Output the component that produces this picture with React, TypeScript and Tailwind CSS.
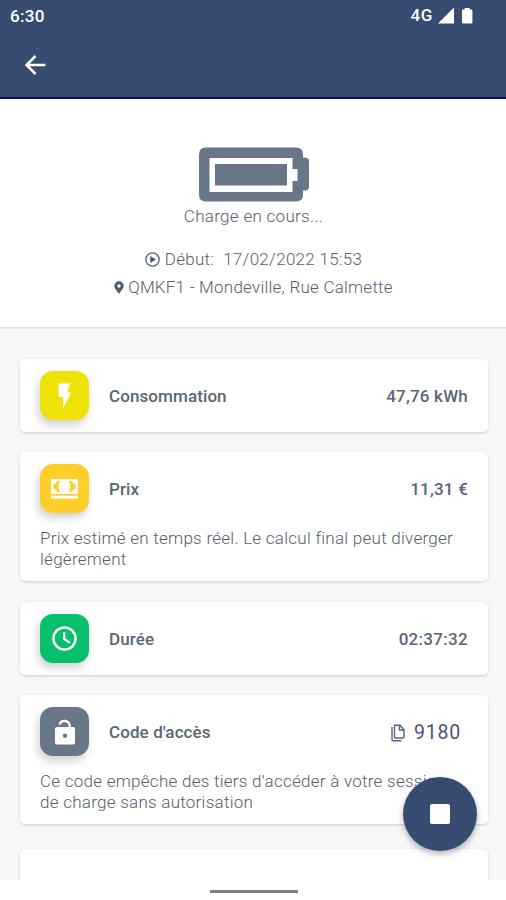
import type { ReactNode } from "react";

function StatusBar() {
  return (
    <div className="flex h-8 items-center justify-between pl-[10px] pr-[32px] text-white">
      <span className="pt-px text-[17px] font-medium tracking-[0.3px]">6:30</span>
      <div className="flex items-center">
        <span className="mr-[5px] text-[17px] font-medium tracking-[0.6px]">4G</span>
        <svg width="36" height="18" viewBox="0 0 36 18" fill="currentColor">
          <path d="M0 16.500 16 0.500V16.500Z" />
          <path d="M24 3.500q0-1 1-1h1.700V1h5v1.500h1.700q1 0 1 1v12q0 1-1 1h-8.400q-1 0-1-1Z" />
        </svg>
      </div>
    </div>
  );
}

function Header() {
  return (
    <header className="h-[99px] shrink-0 border-b-2 border-[#10105c] bg-[#384b71]">
      <StatusBar />
      <div className="flex h-[65px] items-center pl-[25px]">
        <svg width="21" height="20" viewBox="0 0 21 20" fill="none" stroke="white" strokeWidth="2.500">
          <path d="M20.500 10H2M10.500 1 1.500 10l9 9" />
        </svg>
      </div>
    </header>
  );
}

function ChargeStatus() {
  return (
    <section className="flex h-[230px] shrink-0 flex-col items-center border-b-2 border-[#e8e8e8] bg-white pt-12 text-[17px] font-light leading-5 text-[#56616e]">
      <svg width="112" height="56" viewBox="0 0 112 56" className="ml-px">
        <path
          fill="#687787"
          d="M8 .5h90q7 0 7 7v3h2q4 0 4 4v25q0 4-4 4h-2v4q0 7-7 7H8q-7 0-7-7v-40q0-7 7-7Z"
        />
        <path fill="white" fillRule="evenodd" d="M11.500 11h83v11h5v12h-5v11H11.500ZM17 17v21.500H89V17Z" />
      </svg>
      <p className="ml-px mt-[3px] tracking-[0.3px]">Charge en cours...</p>
      <div className="ml-px mt-[23px] flex items-center gap-[5px]">
        <svg width="15" height="15" viewBox="0 0 15 15">
          <circle cx="7.500" cy="7.500" r="6.600" fill="none" stroke="#596979" strokeWidth="1.400" />
          <path d="M5.300 4v7l5.500-3.500Z" fill="#435367" />
        </svg>
        <p className="whitespace-pre tracking-[0.3px]">Début:{"  "}17/02/2022 15:53</p>
      </div>
      <div className="ml-px mt-2 flex items-center gap-1">
        <svg width="10" height="13" viewBox="0 0 10 13">
          <path
            fill="#4b5b6d"
            fillRule="evenodd"
            d="M5 .3A4.700 4.700 0 0 0 .3 5C.3 7 1.500 8 5 12.800 8.500 8 9.700 7 9.700 5A4.700 4.700 0 0 0 5 .3Zm0 3A1.700 1.700 0 1 1 5 6.700 1.700 1.700 0 0 1 5 3.300Z"
          />
        </svg>
        <p className="tracking-[0.23px]">QMKF1 - Mondeville, Rue Calmette</p>
      </div>
    </section>
  );
}

function BoltIcon() {
  return (
    <svg width="14" height="26" viewBox="0 0 14 26" fill="white">
      <path d="M.5.5h12L9 9.500h4L5.200 25V14H.5Z" />
    </svg>
  );
}

function CashIcon() {
  return (
    <svg width="27" height="20" viewBox="0 0 27 20" fill="white">
      <path
        fillRule="evenodd"
        d="M0 0h27v15H0ZM9 2H6.500Q5.500 4.500 2.500 5.500v4Q5.500 10.500 6.500 13H9Q6 7.500 9 2ZM18 2q3 5.500 0 11h2.500q1-2.500 4-3.500v-4Q21.500 4.500 20.500 2Z"
      />
      <path d="M0 16.700h27V19.500H0Z" />
    </svg>
  );
}

function ClockIcon() {
  return (
    <svg width="25" height="25" viewBox="0 0 26 26" fill="none" stroke="white" strokeWidth="2.500">
      <circle cx="13" cy="13" r="11.500" />
      <path d="M12.700 6.500v7l6 4" strokeWidth="2.200" />
    </svg>
  );
}

function LockIcon() {
  return (
    <svg width="20" height="26" viewBox="0 0 20 26">
      <path d="M4.500 5.500A5.300 5.300 0 0 1 14.800 7v3" fill="none" stroke="white" strokeWidth="2.300" />
      <path
        fill="white"
        fillRule="evenodd"
        d="M2 8h16q2 0 2 2V23.500q0 2-2 2H2q-2 0-2-2V10q0-2 2-2Zm8 6.500a2.200 2.200 0 1 0 0 4.400 2.200 2.200 0 0 0 0-4.400Z"
      />
    </svg>
  );
}

function CopyIcon() {
  return (
    <svg width="14" height="18" viewBox="0 0 14 18" fill="none" stroke="#5b6287" strokeWidth="1.400">
      <path d="M3.500 1.200H9l4 4.300V13q0 1-1 1H4.500q-1 0-1-1ZM8.500 1.500V6H13" />
      <path d="M1 3v12.700q0 1 1 1h8.500" />
    </svg>
  );
}

type CardProps = {
  icon: ReactNode;
  color: string;
  label: string;
  value: ReactNode;
  className?: string;
  children?: ReactNode;
};

function Card({ icon, color, label, value, className = "", children }: CardProps) {
  return (
    <div className={`shrink-0 rounded-[5px] bg-white px-5 pt-3 shadow-[0_1px_3px_rgba(0,0,0,0.16)] ${className}`}>
      <div className="flex items-center text-[17px] font-medium tracking-[0.1px] text-[#596675]">
        <div
          className={`flex size-[49px] items-center justify-center rounded-[13px] shadow-[-2px_5px_9px_rgba(0,0,0,0.18)] ${color}`}
        >
          {icon}
        </div>
        <span className="ml-5 flex-1 pt-[2px]">{label}</span>
        <div className="pt-[2px]">{value}</div>
      </div>
      {children && (
        <p className="mt-[15px] whitespace-nowrap text-[17px] font-light leading-[20.5px] tracking-[0.26px] text-[#56606c]">
          {children}
        </p>
      )}
    </div>
  );
}

export default function App() {
  return (
    <div className="relative flex h-[900px] w-[506px] flex-col overflow-hidden bg-white font-['Roboto',sans-serif]">
      <Header />
      <ChargeStatus />
      <main className="flex h-[551px] shrink-0 flex-col overflow-hidden bg-[#f7f7f7] pl-5 pr-[18px] pt-[30px]">
        <Card
          className="h-[73px]"
          icon={<BoltIcon />}
          color="bg-[#efe209]"
          label="Consommation"
          value={<span className="tracking-[0.2px]">47,76 kWh</span>}
        />
        <Card
          className="mt-5 h-[129px]"
          icon={<CashIcon />}
          color="bg-[#ffce27]"
          label="Prix"
          value={<span className="tracking-[0.2px]">11,31 €</span>}
        >
          Prix estimé en temps réel. Le calcul final peut diverger
          <br />
          légèrement
        </Card>
        <Card
          className="mt-[21px] h-[73px]"
          icon={<ClockIcon />}
          color="bg-[#08bf6b]"
          label="Durée"
          value={<span className="tracking-[0.3px]">02:37:32</span>}
        />
        <Card
          className="mt-5 h-[129px]"
          icon={<LockIcon />}
          color="bg-[#687787]"
          label="Code d'accès"
          value={
            <div className="mr-[7px] flex items-center gap-[9px] text-[19.5px] font-normal tracking-[0.8px] text-[#4b527b]">
              <CopyIcon />
              <span>9180</span>
            </div>
          }
        >
          Ce code empêche des tiers d'accéder à votre session
          <br />
          de charge sans autorisation
        </Card>
        <div className="mt-[25px] h-16 shrink-0 rounded-[5px] bg-white shadow-[0_1px_3px_rgba(0,0,0,0.16)]" />
      </main>
      <div className="flex flex-1 justify-center">
        <div className="ml-px mt-[10px] h-[3px] w-[88px] bg-[#818181]" />
      </div>
      <button className="absolute left-[403px] top-[777px] flex size-[74px] items-center justify-center rounded-full bg-[#384b71] shadow-[0_3px_6px_rgba(0,0,0,0.3)]">
        <span className="size-5 rounded-[2px] bg-white" />
      </button>
    </div>
  );
}
